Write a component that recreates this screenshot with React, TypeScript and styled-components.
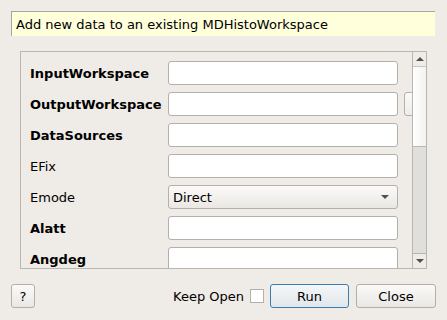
import React from "react";
import styled, { createGlobalStyle } from "styled-components";

const Global = createGlobalStyle`
  html, body { margin: 0; padding: 0; background: #efebe7; }
  body { font-family: "DejaVu Sans", sans-serif; font-size: 13px; color: #000; }
  * { box-sizing: border-box; }
`;

const Dialog = styled.div`
  width: 447px;
  height: 320px;
  padding: 11px 11px 0 11px;
  display: flex;
  flex-direction: column;
  overflow: hidden;
`;

const Tip = styled.div`
  height: 25px;
  background: #ffffdc;
  border-top: 1px solid #a8a49f;
  border-left: 1px solid #a8a49f;
  padding-left: 4px;
  display: flex;
  align-items: center;
  white-space: nowrap;
  margin-right: 1px;
`;

const Frame = styled.div`
  margin: 15px 9px 0 9px;
  height: 218px;
  border: 1px solid #b9b5b0;
  display: flex;
  overflow: hidden;
`;

const Viewport = styled.div`
  flex: 1;
  overflow: hidden;
  padding: 9px 0 0 9px;
  display: flex;
  flex-direction: column;
  gap: 7px;
`;

const Row = styled.div`
  display: flex;
  align-items: center;
  height: 24px;
  flex-shrink: 0;
`;

const Label = styled.div<{ $bold?: boolean }>`
  width: 138px;
  flex-shrink: 0;
  font-weight: ${(p) => (p.$bold ? "bold" : "normal")};
  white-space: nowrap;
`;

const Input = styled.div`
  width: 230px;
  height: 24px;
  flex-shrink: 0;
  background: #fff;
  border: 1px solid #b3afaa;
  border-radius: 3px;
`;

const Combo = styled.div`
  width: 230px;
  height: 24px;
  flex-shrink: 0;
  border: 1px solid #b3afaa;
  border-radius: 3px;
  background: linear-gradient(#fbfaf9, #eae7e3);
  display: flex;
  align-items: center;
  justify-content: space-between;
  padding: 0 8px 0 4px;
`;

const Arrow = styled.div<{ $up?: boolean }>`
  width: 0;
  height: 0;
  border-left: 4px solid transparent;
  border-right: 4px solid transparent;
  ${(p) => (p.$up ? "border-bottom: 4px solid #505050;" : "border-top: 4px solid #505050;")}
`;

const Browse = styled.div`
  margin-left: 6px;
  width: 30px;
  height: 24px;
  flex-shrink: 0;
  border: 1px solid #b3afaa;
  border-radius: 3px;
  background: linear-gradient(#fbfaf9, #efece9);
`;

const ScrollBar = styled.div`
  width: 14px;
  flex-shrink: 0;
  border-left: 1px solid #b9b5b0;
  display: flex;
  flex-direction: column;
  background: #e0dfdc;
`;

const ScrollBtn = styled.div<{ $top?: boolean }>`
  height: 15px;
  flex-shrink: 0;
  background: #efebe7;
  display: flex;
  align-items: center;
  justify-content: center;
  ${(p) => (p.$top ? "border-bottom: 1px solid #c9c6c2;" : "border-top: 1px solid #b9b5b0;")}
`;

const Handle = styled.div`
  height: 80px;
  flex-shrink: 0;
  background: linear-gradient(90deg, #ffffff, #f3f2f0);
  border-bottom: 1px solid #b9b5b0;
`;

const Groove = styled.div`
  flex: 1;
`;

const Footer = styled.div`
  margin-top: 15px;
  display: flex;
  align-items: center;
  height: 24px;
`;

const Button = styled.div<{ $w: number; $default?: boolean; $ml?: number }>`
  width: ${(p) => p.$w}px;
  height: 24px;
  margin-left: ${(p) => p.$ml ?? 0}px;
  border: 1px solid ${(p) => (p.$default ? "#3b7cb0" : "#b3afaa")};
  border-radius: 3px;
  background: ${(p) => (p.$default ? "linear-gradient(#f5f7f9, #e0e6ea)" : "linear-gradient(#fbfaf9, #eae7e3)")};
  display: flex;
  align-items: center;
  justify-content: center;
  flex-shrink: 0;
`;

const Spacer = styled.div`
  flex: 1;
`;

const KeepLabel = styled.span`
  margin-right: 6px;
`;

const Check = styled.div`
  width: 14px;
  height: 14px;
  background: #fff;
  border: 1px solid #b3afaa;
  margin-right: 6px;
`;

const rows: { label: string; bold: boolean; kind?: "combo" | "browse" }[] = [
  { label: "InputWorkspace", bold: true },
  { label: "OutputWorkspace", bold: true, kind: "browse" },
  { label: "DataSources", bold: true },
  { label: "EFix", bold: false },
  { label: "Emode", bold: false, kind: "combo" },
  { label: "Alatt", bold: true },
  { label: "Angdeg", bold: true },
];

export default function App() {
  return (
    <>
      <Global />
      <Dialog>
        <Tip>Add new data to an existing MDHistoWorkspace</Tip>
        <Frame>
          <Viewport>
            {rows.map((r) => (
              <Row key={r.label}>
                <Label $bold={r.bold}>{r.label}</Label>
                {r.kind === "combo" ? (
                  <Combo>
                    <span>Direct</span>
                    <Arrow />
                  </Combo>
                ) : (
                  <Input />
                )}
                {r.kind === "browse" && <Browse />}
              </Row>
            ))}
          </Viewport>
          <ScrollBar>
            <ScrollBtn $top>
              <Arrow $up />
            </ScrollBtn>
            <Handle />
            <Groove />
            <ScrollBtn>
              <Arrow />
            </ScrollBtn>
          </ScrollBar>
        </Frame>
        <Footer>
          <Button $w={24}>?</Button>
          <Spacer />
          <KeepLabel>Keep Open</KeepLabel>
          <Check />
          <Button $w={79} $default>Run</Button>
          <Button $w={80} $ml={7}>Close</Button>
        </Footer>
      </Dialog>
    </>
  );
}
